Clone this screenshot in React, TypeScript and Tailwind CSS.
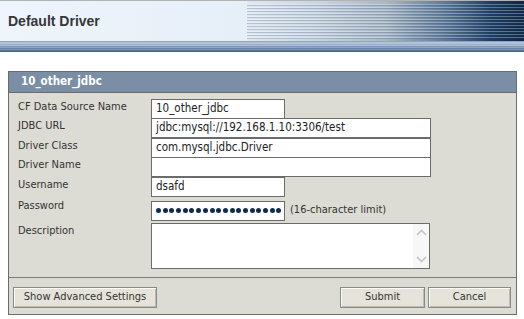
import React from "react";

/* Data source edit form: striped title bar, slate panel header,
   label/input rows on a beige body, and a button footer. */

const font = "font-['DejaVu_Sans_Condensed','DejaVu_Sans',sans-serif]";

type Row = {
  label: string;
  h: string;
  kind: "short" | "long" | "password" | "textarea";
  value?: string;
};

const rows: Row[] = [
  { label: "CF Data Source Name", h: "h-[19px]", kind: "short", value: "10_other_jdbc" },
  { label: "JDBC URL", h: "h-[20px]", kind: "long", value: "jdbc:mysql://192.168.1.10:3306/test" },
  { label: "Driver Class", h: "h-[19px]", kind: "long", value: "com.mysql.jdbc.Driver" },
  { label: "Driver Name", h: "h-[20px]", kind: "long", value: "" },
  { label: "Username", h: "h-[21px]", kind: "short", value: "dsafd" },
  { label: "Password", h: "h-[25px]", kind: "password" },
  { label: "Description", h: "h-[46px]", kind: "textarea" },
];

function Field({ row }: { row: Row }) {
  if (row.kind === "password") {
    return (
      <div className="flex items-center gap-[5px]">
        <div className="flex h-[20px] w-[134px] items-center gap-[1.7px] border border-[#6b6b6b] bg-white pl-[4px]">
          {Array.from({ length: 19 }).map((_, i) => (
            <span key={i} className="h-[5px] w-[5px] rounded-full bg-[#0f2b4f]" />
          ))}
        </div>
        <span className="text-[11px] text-[#333]">(16-character limit)</span>
      </div>
    );
  }
  if (row.kind === "textarea") {
    return (
      <div className="flex h-[46px] w-[279px] border border-[#6b6b6b] bg-white">
        <div className="flex-1" />
        <div className="flex w-[16px] flex-col items-center justify-between bg-[#f7f7f7] py-[5px]">
          <svg width="11" height="7" viewBox="0 0 11 7" fill="none" stroke="#c4c4c4" strokeWidth="1.6">
            <path d="M1 6 L5.5 1.5 L10 6" />
          </svg>
          <svg width="11" height="7" viewBox="0 0 11 7" fill="none" stroke="#c4c4c4" strokeWidth="1.6">
            <path d="M1 1 L5.5 5.5 L10 1" />
          </svg>
        </div>
      </div>
    );
  }
  return (
    <div
      className={`flex h-[20px] items-center border border-[#6b6b6b] bg-white pl-[4px] text-[11.5px] text-[#222] ${
        row.kind === "short" ? "w-[134px]" : "w-[280px]"
      }`}
    >
      {row.value}
    </div>
  );
}

function Btn({ children, w }: { children: React.ReactNode; w: string }) {
  return (
    <button
      className={`flex h-[21px] items-center justify-center border border-[#8a8a86] bg-[#e6e4da] text-[11px] text-[#333] shadow-[inset_1px_1px_0_#fbfbf8,inset_-1px_-1px_0_#bdbbb2] ${w}`}
    >
      {children}
    </button>
  );
}

export default function App() {
  return (
    <div className={`h-[319px] w-[524px] overflow-hidden bg-white ${font}`}>
      {/* Title bar */}
      <div className="flex h-[41px] border-t border-[#b3b3b3]">
        <div className="flex w-[247px] items-center bg-[linear-gradient(to_right,#eef5fc,#e6eef7)] pl-[8px]">
          <span className="font-['Liberation_Sans',Arial,sans-serif] text-[14px] font-bold text-[#363636]">
            Default Driver
          </span>
        </div>
        <div className="flex flex-1 flex-col bg-[linear-gradient(to_right,#dfe8f3_0%,#c9d6e3_25%,#a8b8c8_50%,#5c7897_72%,#1d3d64_88%,#0d2747_100%)]">
          <div className="mt-[3px] h-[35px] bg-[repeating-linear-gradient(to_bottom,rgba(255,255,255,0.3)_0px,rgba(255,255,255,0.3)_1px,rgba(40,60,90,0.22)_1px,rgba(40,60,90,0.22)_2px,transparent_2px,transparent_3px)]" />
        </div>
      </div>
      {/* Blue stripe band */}
      <div className="h-[11px] bg-[linear-gradient(to_bottom,#8ea4c0_0px,#8ea4c0_1px,#b3c3d7_1px,#b3c3d7_3px,#9cb0c9_3px,#9cb0c9_4px,#aebfd4_4px,#aebfd4_5px,#7d95b6_5px,#7d95b6_6px,#8fa5c2_6px,#8fa5c2_7px,#6a84a9_7px,#6a84a9_8px,#7a91b3_8px,#7a91b3_9px,#58749c_9px,#58749c_10px,#4a6690_10px)]" />

      {/* Panel */}
      <div className="ml-[8px] mt-[19px] w-[509px] border border-[#6b6b6b] bg-[#dddcd4]">
        <div className="flex h-[20px] items-center bg-[#7a8ea5] pl-[12px] text-[11.5px] font-bold text-white">
          10_other_jdbc
        </div>
        <div className="border-t border-[#6b6b6b] pt-[6px] pb-[8px]">
          {rows.map((row) => (
            <div key={row.label} className={`flex ${row.h}`}>
              <div className="w-[142px] pl-[9px] text-[11px] leading-[15px] text-[#333]">{row.label}</div>
              <Field row={row} />
            </div>
          ))}
        </div>
        <div className="flex items-center justify-between border-t border-[#7a7a7a] pt-[9px] pb-[6px] pl-[4px] pr-[5px]">
          <Btn w="w-[144px]">Show Advanced Settings</Btn>
          <div className="flex gap-[3px]">
            <Btn w="w-[85px]">Submit</Btn>
            <Btn w="w-[83px]">Cancel</Btn>
          </div>
        </div>
      </div>
    </div>
  );
}
